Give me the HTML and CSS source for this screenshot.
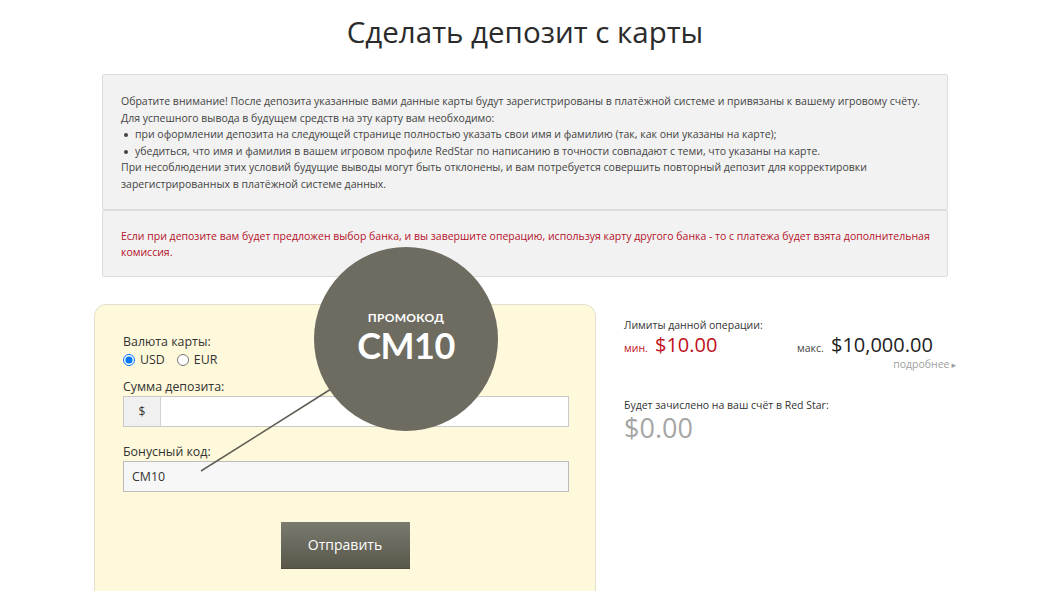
FILE: index.html
```html
<!DOCTYPE html>
<html lang="ru">
<head>
<meta charset="UTF-8">
<title>Сделать депозит с карты</title>
<link rel="stylesheet" href="styles.css">
</head>
<body>
<div class="page">
    <h1>Сделать депозит с карты</h1>

    <div class="notice">
        <p>Обратите внимание! После депозита указанные вами данные карты будут зарегистрированы в платёжной системе и привязаны к вашему игровому счёту.</p>
        <p>Для успешного вывода в будущем средств на эту карту вам необходимо:</p>
        <ul>
            <li>при оформлении депозита на следующей странице полностью указать свои имя и фамилию (так, как они указаны на карте);</li>
            <li>убедиться, что имя и фамилия в вашем игровом профиле RedStar по написанию в точности совпадают с теми, что указаны на карте.</li>
        </ul>
        <p>При несоблюдении этих условий будущие выводы могут быть отклонены, и вам потребуется совершить повторный депозит для корректировки зарегистрированных в платёжной системе данных.</p>
    </div>
    <div class="notice warn">
        <p>Если при депозите вам будет предложен выбор банка, и вы завершите операцию, используя карту другого банка - то с платежа будет взята дополнительная комиссия.</p>
    </div>

    <div class="deposit">
        <form class="card-form">
            <div class="field currency">
                <label>Валюта карты:</label>
                <div class="radios">
                    <label><input type="radio" name="cur" checked> USD</label>
                    <label><input type="radio" name="cur"> EUR</label>
                </div>
            </div>
            <div class="field">
                <label>Сумма депозита:</label>
                <div class="input-group">
                    <span class="addon">$</span>
                    <input type="text">
                </div>
            </div>
            <div class="field last">
                <label>Бонусный код:</label>
                <input type="text" class="code" value="CM10">
            </div>
            <div class="actions">
                <button type="button">Отправить</button>
            </div>

            <svg class="pointer" width="502" height="300">
                <line x1="106" y1="166" x2="236" y2="84" stroke="#5d5b52" stroke-width="1.5"/>
            </svg>
            <div class="promo">
                <span class="promo-label">ПРОМОКОД</span>
                <span class="promo-code">CM10</span>
            </div>
        </form>

        <div class="summary">
            <div class="caption">Лимиты данной операции:</div>
            <div class="limits">
                <div class="limit min"><small>мин.</small> $10.00</div>
                <div class="limit"><small>макс.</small> $10,000.00</div>
            </div>
            <a class="more" href="#">подробнее<span>&#9656;</span></a>

            <div class="caption credit">Будет зачислено на ваш счёт в Red Star:</div>
            <div class="total">$0.00</div>
        </div>
    </div>
</div>
</body>
</html>
```

FILE: styles.css
```css
* { margin: 0; padding: 0; box-sizing: border-box; }
body {
    font-family: "Open Sans", "DejaVu Sans", sans-serif;
    color: #333;
    background: #fff;
}
.page {
    width: 862px;
    margin: 0 auto;
}
h1 {
    font-weight: 400;
    font-size: 29.5px;
    color: #2b2b2b;
    text-align: center;
    line-height: 40px;
    padding-top: 12px;
    margin-bottom: 22px;
}
.notice {
    margin: 0 8px;
    background: #f2f2f2;
    border: 1px solid #dcdcdc;
    border-radius: 2px;
    padding: 18px 18px 16px;
    font-size: 10.5px;
    line-height: 16.6px;
    color: #444;
}
.notice ul { list-style: none; }
.notice li { position: relative; padding-left: 14px; }
.notice li::before {
    content: "";
    position: absolute; left: 3px; top: 7px;
    width: 4px; height: 4px; border-radius: 50%;
    background: #444;
}
.notice.warn {
    color: #b5122b;
    padding: 17px 8px 15px 18px;
}
.deposit {
    display: flex;
    margin-top: 27px;
}
.card-form {
    position: relative;
    width: 502px;
    height: 300px;
    background: #fff9db;
    border: 1px solid #e2dfcc;
    border-radius: 12px;
    padding: 29px 28px 0;
    font-size: 12.4px;
    color: #333;
}
.field { margin-bottom: 17px; }
.field.currency { margin-bottom: 10px; }
.field.last { margin-bottom: 0; }
.field > label { display: block; line-height: 16px; margin-bottom: 1px; }
.radios { display: flex; gap: 12px; line-height: 18px; margin-top: 1px; }
.radios label { display: flex; align-items: center; gap: 5px; }
.radios input { width: 12px; height: 12px; margin: 0; }
.input-group {
    display: flex;
    height: 31px;
    width: 446px;
    border: 1px solid #c9c9c9;
    background: #fff;
}
.addon {
    width: 37px;
    background: #f0f0f0;
    border-right: 1px solid #d2d2d2;
    display: flex; align-items: center; justify-content: center;
    font-size: 12px;
}
.input-group input {
    flex: 1; border: none; outline: none; background: #fff;
}
.code {
    display: block;
    width: 446px;
    height: 31px;
    border: 1px solid #bdbdbd;
    background: #f7f7f7;
    padding: 0 8px;
    font-family: inherit;
    font-size: 12.4px;
    color: #333;
}
.actions {
    display: flex;
    justify-content: center;
    padding-top: 30px;
}
.actions button {
    width: 129px;
    height: 47px;
    border: none;
    border-bottom: 1px solid #4e4c40;
    background: linear-gradient(#7b7a6f, #58574a);
    color: #fff;
    font-family: inherit;
    font-size: 14px;
}
.pointer {
    position: absolute; left: 0; top: 0;
    pointer-events: none;
}
.promo {
    position: absolute;
    left: 219px; top: -58px;
    width: 184px; height: 184px;
    border-radius: 50%;
    background: #6e6c61;
    color: #fff;
    display: flex; flex-direction: column; align-items: center;
    padding-top: 63px;
    font-family: "Lato", "Open Sans", sans-serif;
    font-weight: 700;
}
.promo-label { font-size: 12px; letter-spacing: 0.3px; line-height: 16px; }
.promo-code { font-size: 36px; line-height: 38px; letter-spacing: -0.5px; }
.summary {
    flex: 1;
    padding: 14px 0 0 28px;
    font-size: 10.5px;
    color: #333;
}
.caption { line-height: 15px; }
.limits { display: flex; }
.limit {
    font-size: 20px;
    line-height: 24px;
    color: #222;
}
.limit small { font-size: 10.5px; color: #444; margin-right: 2px; }
.limit.min { width: 173px; color: #c01020; }
.limit.min small { color: #c01020; }
.more {
    display: block;
    margin-top: -3px;
    text-align: right;
    color: #a0a0a0;
    text-decoration: none;
    font-size: 10.5px;
    line-height: 14px;
}
.more span { font-size: 9px; margin-left: 2px; }
.credit { margin-top: 26px; }
.total {
    font-size: 27px;
    line-height: 30px;
    color: #a6a6a6;
}
```
